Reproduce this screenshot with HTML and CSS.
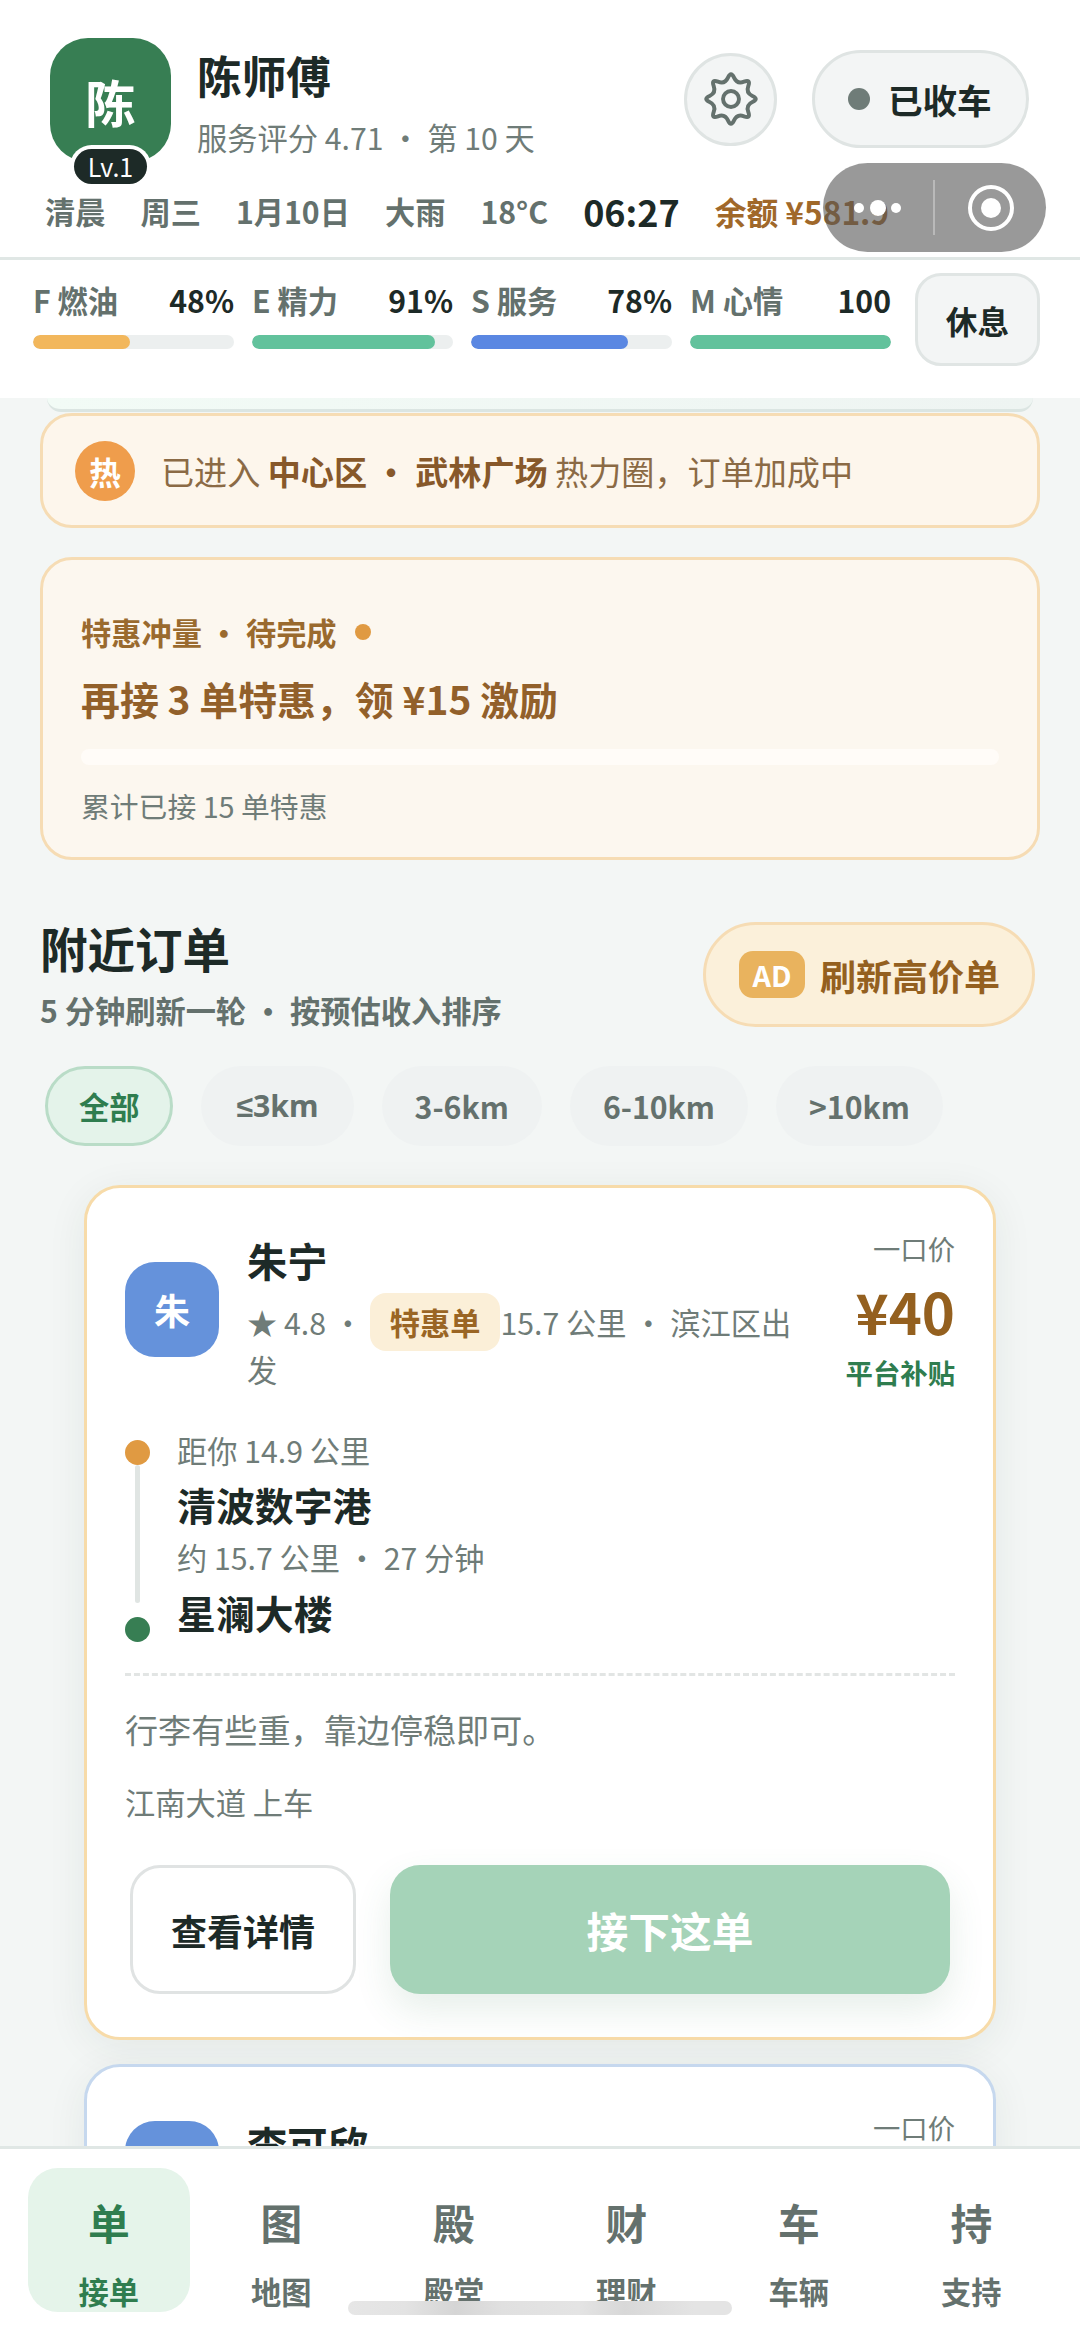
FILE: index.html
```html
<!DOCTYPE html>
<html lang="zh-CN">
<head>
<meta charset="utf-8">
<title>接单</title>
<link rel="stylesheet" href="styles.css">
</head>
<body>
<div class="app">
  <header class="header">
    <div class="head-top">
      <div class="avatar">陈<span class="level">Lv.1</span></div>
      <div class="driver">
        <div class="driver-name">陈师傅</div>
        <div class="driver-sub">服务评分 4.71 ・ 第 10 天</div>
      </div>
      <div class="actions">
        <button class="gear-btn" aria-label="设置">
          <svg class="gear" viewBox="-32 -32 64 64" width="60" height="60">
            <path d="M22.85 3.25Q15.71 6.51 18.46 13.86T13.86 18.46T3.25 22.85T-3.25 22.85T-13.86 18.46T-18.46 13.86T-22.85 3.25T-22.85 -3.25T-18.46 -13.86T-13.86 -18.46T-3.25 -22.85T3.25 -22.85T13.86 -18.46T18.46 -13.86T22.85 -3.25T22.85 3.25Z"/>
            <circle r="8.5"/>
          </svg>
        </button>
        <div class="status-pill"><span class="status-dot"></span>已收车</div>
      </div>
    </div>
    <div class="status-row">
      <span>清晨</span><span>周三</span><span>1月10日</span><span>大雨</span><span>18°C</span>
      <span class="clock">06:27</span><span class="balance">余额 ¥581.9</span>
    </div>
    <div class="stats">
      <div class="stat">
        <div class="stat-top"><span class="stat-label">F 燃油</span><span class="stat-val">48%</span></div>
        <div class="track"><div class="fill fill-fuel" style="width:48.5%"></div></div>
      </div>
      <div class="stat">
        <div class="stat-top"><span class="stat-label">E 精力</span><span class="stat-val">91%</span></div>
        <div class="track"><div class="fill fill-green" style="width:91%"></div></div>
      </div>
      <div class="stat">
        <div class="stat-top"><span class="stat-label">S 服务</span><span class="stat-val">78%</span></div>
        <div class="track"><div class="fill fill-blue" style="width:78%"></div></div>
      </div>
      <div class="stat">
        <div class="stat-top"><span class="stat-label">M 心情</span><span class="stat-val">100</span></div>
        <div class="track"><div class="fill fill-green" style="width:100%"></div></div>
      </div>
      <button class="rest-btn">休息</button>
    </div>
  </header>

  <main class="feed">
    <div class="clipped-card"></div>
    <div class="hot-banner">
      <span class="hot-icon">热</span>
      <span class="hot-text">已进入 <b>中心区 ・ 武林广场</b> 热力圈，订单加成中</span>
    </div>
    <section class="promo">
      <div class="promo-title">特惠冲量 ・ 待完成<span class="promo-dot"></span></div>
      <div class="promo-main">再接 3 单特惠，领 ¥15 激励</div>
      <div class="promo-track"></div>
      <div class="promo-note">累计已接 15 单特惠</div>
    </section>
    <div class="section-head">
      <div>
        <h2 class="section-title">附近订单</h2>
        <div class="section-sub">5 分钟刷新一轮 ・ 按预估收入排序</div>
      </div>
      <button class="ad-btn"><span class="ad-chip">AD</span>刷新高价单</button>
    </div>
    <div class="chips">
      <span class="chip chip-on">全部</span>
      <span class="chip chip-le">≤3km</span>
      <span class="chip">3-6km</span>
      <span class="chip">6-10km</span>
      <span class="chip">&gt;10km</span>
    </div>
    <article class="order order-deal">
      <div class="order-head">
        <div class="rider">朱</div>
        <div class="rider-info">
          <div class="rider-name">朱宁</div>
          <div class="rider-meta">★ 4.8 ・ <span class="deal-tag">特惠单</span>15.7 公里 ・ 滨江区出发</div>
        </div>
        <div class="price-box">
          <div class="price-label">一口价</div>
          <div class="price">¥40</div>
          <div class="price-note">平台补贴</div>
        </div>
      </div>
      <div class="route">
        <div class="rail">
          <span class="rail-dot rail-start"></span>
          <span class="rail-line"></span>
          <span class="rail-dot rail-end"></span>
        </div>
        <div class="route-text">
          <div class="route-sub route-sub-first">距你 14.9 公里</div>
          <div class="route-place">清波数字港</div>
          <div class="route-sub route-sub-second">约 15.7 公里 ・ 27 分钟</div>
          <div class="route-place route-place-last">星澜大楼</div>
        </div>
      </div>
      <div class="order-note">行李有些重，靠边停稳即可。</div>
      <div class="order-pickup">江南大道 上车</div>
      <div class="order-actions">
        <button class="btn-detail">查看详情</button>
        <button class="btn-accept">接下这单</button>
      </div>
    </article>
    <article class="order order-plain">
      <div class="order-head">
        <div class="rider">李</div>
        <div class="rider-info">
          <div class="rider-name">李可欣</div>
          <div class="rider-meta">★ 4.9 ・ 8.2 公里</div>
        </div>
        <div class="price-box">
          <div class="price-label">一口价</div>
          <div class="price">¥32</div>
        </div>
      </div>
    </article>
  </main>

  <nav class="tabbar">
    <div class="tab tab-on"><span class="tab-icon">单</span><span class="tab-label">接单</span></div>
    <div class="tab"><span class="tab-icon">图</span><span class="tab-label">地图</span></div>
    <div class="tab"><span class="tab-icon">殿</span><span class="tab-label">殿堂</span></div>
    <div class="tab"><span class="tab-icon">财</span><span class="tab-label">理财</span></div>
    <div class="tab"><span class="tab-icon">车</span><span class="tab-label">车辆</span></div>
    <div class="tab"><span class="tab-icon">持</span><span class="tab-label">支持</span></div>
  </nav>

  <div class="capsule">
    <svg class="capsule-svg" viewBox="0 0 223 89" width="223" height="89">
      <circle cx="36" cy="45" r="5" fill="#fff"/>
      <circle cx="55" cy="45" r="8" fill="#fff"/>
      <circle cx="73" cy="45" r="5" fill="#fff"/>
      <rect x="110" y="17" width="2" height="55" fill="#b9b9b9"/>
      <circle cx="168" cy="45" r="21" fill="none" stroke="#fff" stroke-width="4"/>
      <circle cx="168" cy="45" r="10" fill="#fff"/>
    </svg>
  </div>
  <div class="home-bar"></div>
</div>
</body>
</html>
```

FILE: styles.css
```css
* { box-sizing: border-box; }
html, body { margin: 0; padding: 0; }
body {
  font-family: "Noto Sans CJK SC", "Noto Sans", sans-serif;
  color: #1d2a27;
  background: #f3f6f5;
}
button { font-family: inherit; padding: 0; cursor: pointer; }
.app {
  position: relative;
  width: 1080px;
  height: 2337px;
  display: flex;
  flex-direction: column;
  overflow: hidden;
  background: #f3f6f5;
}

/* header */
.header { flex: none; height: 398px; background: #fff; position: relative; z-index: 2; }
.head-top { display: flex; height: 188px; padding: 38px 51px 0 50px; }
.avatar {
  position: relative;
  width: 121px;
  height: 124px;
  border-radius: 38px;
  background: #377e53;
  color: #fff;
  font-size: 50.4px;
  font-weight: 700;
  line-height: 128px;
  text-align: center;
}
.level {
  position: absolute;
  left: 24px;
  top: 111px;
  width: 73px;
  height: 35px;
  box-shadow: 0 0 0 4px #fff;
  border-radius: 18px;
  background: #1d2a27;
  color: #fff;
  font-size: 25px;
  font-weight: 400;
  line-height: 35px;
}
.driver { margin-left: 26px; }
.driver-name { font-size: 44.64px; font-weight: 700; line-height: 60px; margin-top: 7px; }
.driver-sub { font-size: 30.24px; line-height: 42px; margin-top: 11px; color: #6f7c78; }
.actions { margin-left: auto; display: flex; align-items: center; gap: 35px; height: 98px; margin-top: 12px; }
.gear-btn {
  width: 93px;
  height: 93px;
  border-radius: 50%;
  border: 3px solid #dfe4e3;
  background: #f3f5f5;
  display: flex;
  align-items: center;
  justify-content: center;
}
.gear { fill: none; stroke: #64716d; stroke-width: 4.2; stroke-linejoin: round; }
.status-pill {
  width: 217px;
  height: 98px;
  border: 3px solid #dfe4e3;
  border-radius: 49px;
  background: #f3f5f5;
  display: flex;
  align-items: center;
  padding-left: 33px;
  font-size: 34.56px;
  font-weight: 700;
}
.status-dot { width: 22px; height: 22px; border-radius: 50%; background: #6f7c78; margin-right: 18px; }
.status-row {
  display: flex;
  align-items: center;
  gap: 35px;
  height: 72px;
  padding: 0 0 24px 45px;
  border-bottom: 3px solid #e0e7e5;
  font-size: 30.24px;
  font-weight: 700;
  color: #64716d;
  white-space: nowrap;
  line-height: 40px;
}
.clock { font-size: 36px; color: #1d2a27; }
.balance { font-size: 31.68px; color: #a0682a; }
.stats { display: flex; align-items: flex-start; padding: 13px 0 0 33px; gap: 18px; }
.stat { width: 201px; padding-top: 7px; }
.stat-top { display: flex; justify-content: space-between; align-items: center; height: 40px; font-size: 30.24px; font-weight: 700; color: #64716d; white-space: nowrap; }
.stat-val { color: #1d2a27; }
.track { margin-top: 15px; height: 14px; border-radius: 7px; background: #ecefef; overflow: hidden; }
.fill { height: 100%; border-radius: 7px; }
.fill-fuel { background: #f2b75c; }
.fill-green { background: #62c29c; }
.fill-blue { background: #5a87e2; }
.rest-btn {
  width: 125px;
  height: 93px;
  margin-left: 6px;
  border: 3px solid #e0e5e4;
  border-radius: 26px;
  background: #f3f5f5;
  color: #1d2a27;
  font-size: 31.68px;
  font-weight: 700;
}

/* feed */
.feed { flex: 1; min-height: 0; overflow: hidden; padding: 0 40px; }
.clipped-card {
  height: 14px;
  margin: 0 7px;
  border-bottom: 3px solid #dbe5e2;
  border-radius: 0 0 30px 30px;
  background: linear-gradient(90deg, #f2fbf6, #eef4f2);
}
.hot-banner {
  display: flex;
  align-items: center;
  height: 115px;
  margin-top: 1px;
  padding-left: 32px;
  border: 3px solid #f6dcb4;
  border-radius: 32px;
  background: #fdf6ec;
}
.hot-icon {
  width: 60px;
  height: 60px;
  border-radius: 50%;
  background: #ef9d4c;
  color: #fff;
  font-size: 31.68px;
  font-weight: 700;
  line-height: 60px;
  text-align: center;
}
.hot-text { margin-left: 26px; font-size: 33.12px; color: #8b6a45; white-space: nowrap; }
.hot-text b { color: #87582a; font-weight: 700; }
.promo {
  height: 303px;
  margin-top: 29px;
  padding: 52px 38px 0;
  border: 3px solid #f6dcb4;
  border-radius: 32px;
  background: #fcf7ef;
}
.promo-title { display: flex; align-items: center; font-size: 30.24px; font-weight: 700; line-height: 40px; color: #9a6a2e; }
.promo-dot { width: 16px; height: 16px; margin-left: 18px; border-radius: 50%; background: #e09a42; }
.promo-main { margin-top: 18px; font-size: 38.88px; font-weight: 700; line-height: 56px; color: #92602a; }
.promo-track { margin-top: 23px; height: 16px; border-radius: 8px; background: #fffcf8; }
.promo-note { margin-top: 21px; font-size: 28.8px; line-height: 40px; color: #6f7c78; }
.section-head { display: flex; justify-content: space-between; margin-top: 62px; }
.section-title { margin: 0; font-size: 47.52px; font-weight: 700; line-height: 52px; }
.section-sub { margin-top: 15px; font-size: 30.24px; font-weight: 700; line-height: 42px; color: #64716d; }
.ad-btn {
  display: flex;
  align-items: center;
  width: 332px;
  height: 105px;
  margin-right: 5px;
  padding-left: 33px;
  border: 3px solid #f6dcb4;
  border-radius: 53px;
  background: #fbf0da;
  color: #94601f;
  font-size: 36px;
  font-weight: 700;
}
.ad-chip {
  width: 66px;
  height: 47px;
  margin-right: 15px;
  border-radius: 14px;
  background: #e9b35e;
  color: #fff;
  font-size: 28.8px;
  line-height: 47px;
  text-align: center;
}
.chips { display: flex; gap: 28px; margin: 35px 0 0 5px; }
.chip {
  height: 80px;
  padding: 0 33px;
  border-radius: 40px;
  background: #eff2f2;
  color: #64716d;
  font-size: 30.24px;
  font-weight: 700;
  line-height: 80px;
}
.chip-le { padding: 0 35px; font-family: "Noto Sans", sans-serif; }
.chip-on {
  padding: 0 31px;
  border: 3px solid #b9dcc7;
  background: #e4f3ea;
  color: #2f7d4f;
  line-height: 74px;
}
.order {
  margin: 39px 44px 0;
  padding: 40px 38px 43px;
  border: 3px solid #f7dba9;
  border-radius: 36px;
  background: #fff;
  box-shadow: 0 8px 40px rgba(30, 50, 45, .07);
}
.order-plain { margin-top: 24px; border-color: #c6d8ee; padding-bottom: 100px; }
.order-head { display: flex; align-items: flex-start; }
.rider {
  flex: none;
  width: 94px;
  height: 95px;
  margin-top: 34px;
  border-radius: 30px;
  background: #6592db;
  color: #fff;
  font-size: 36px;
  font-weight: 700;
  line-height: 95px;
  text-align: center;
}
.order-plain .rider { margin-top: 14px; }
.rider-info { flex: 1; min-width: 0; margin: 5px 0 0 28px; }
.order-plain .rider-info { margin-top: 10px; }
.rider-name { font-size: 40.32px; font-weight: 700; line-height: 54px; }
.rider-meta { margin-top: 6px; font-size: 30.24px; line-height: 44px; color: #6f7c78; }
.deal-tag {
  display: inline-block;
  height: 58px;
  margin-bottom: -4px;
  padding: 0 20px;
  border-radius: 16px;
  background: #fbefd8;
  color: #9a6524;
  font-weight: 700;
  line-height: 58px;
}
.price-box { flex: none; width: 140px; text-align: right; }
.price-label { font-size: 27.36px; line-height: 40px; color: #6f7c78; }
.price { margin-top: 5px; font-size: 56.16px; font-weight: 700; line-height: 76px; color: #94601f; }
.price-note { margin-top: 3px; font-size: 27.36px; font-weight: 700; line-height: 40px; color: #2f7d4f; }
.route { display: flex; margin-top: 36px; padding-bottom: 31px; border-bottom: 3px dashed #e2e5e4; }
.rail { display: flex; flex-direction: column; align-items: center; width: 25px; padding-top: 12px; }
.rail-dot { width: 25px; height: 25px; border-radius: 50%; }
.rail-start { background: #e09a42; }
.rail-end { margin-top: 14px; background: #377e53; }
.rail-line { width: 5px; height: 138px; border-radius: 3px; background: #e0e5e3; }
.route-text { margin-left: 27px; }
.route-sub { font-size: 30.24px; line-height: 44px; color: #6f7c78; }
.route-sub-first { margin-bottom: 3px; }
.route-sub-second { margin-top: 2px; }
.route-place { font-size: 38.88px; font-weight: 700; line-height: 58px; }
.route-place-last { margin-top: 4px; }
.order-note { margin-top: 29px; font-size: 33.12px; line-height: 48px; color: #6f7c78; }
.order-pickup { margin-top: 28px; font-size: 30.24px; line-height: 42px; color: #6f7c78; }
.order-actions { display: flex; gap: 34px; margin: 42px 5px 0; }
.btn-detail {
  width: 226px;
  height: 129px;
  border: 3px solid #e0e3e3;
  border-radius: 30px;
  background: #fff;
  color: #1d2a27;
  font-size: 36px;
  font-weight: 700;
}
.btn-accept {
  flex: 1;
  height: 129px;
  border: 0;
  border-radius: 30px;
  background: #a5d3b8;
  box-shadow: 0 16px 36px rgba(55, 126, 83, .12);
  color: #fff;
  font-size: 41.76px;
  font-weight: 700;
}

/* tab bar */
.tabbar {
  flex: none;
  position: relative;
  z-index: 2;
  display: flex;
  gap: 11px;
  height: 191px;
  padding: 19px 28px 0;
  border-top: 3px solid #e0e7e5;
  background: #fff;
}
.tab {
  flex: 1;
  height: 144px;
  padding-top: 24px;
  border-radius: 30px;
  display: flex;
  flex-direction: column;
  align-items: center;
  color: #64716d;
}
.tab-on { background: #e5f4ea; color: #2f7d4f; }
.tab-icon { font-size: 41.76px; font-weight: 700; line-height: 60px; }
.tab-label { margin-top: 19px; font-size: 30.24px; font-weight: 700; line-height: 40px; }
.capsule {
  position: absolute;
  z-index: 3;
  left: 823px;
  top: 163px;
  width: 223px;
  height: 89px;
  border-radius: 45px;
  background: rgba(85, 85, 85, .6);
}
.capsule-svg { display: block; }
.home-bar {
  position: absolute;
  z-index: 3;
  left: 348px;
  top: 2301px;
  width: 384px;
  height: 14px;
  border-radius: 7px;
  background: linear-gradient(90deg, #e6e6e6 0%, #e3e3e3 15%, #d5d5d5 28%, #e0e0e0 40%, #e4e4e4 60%, #d8d8d8 72%, #e4e4e4 90%);
}
```
